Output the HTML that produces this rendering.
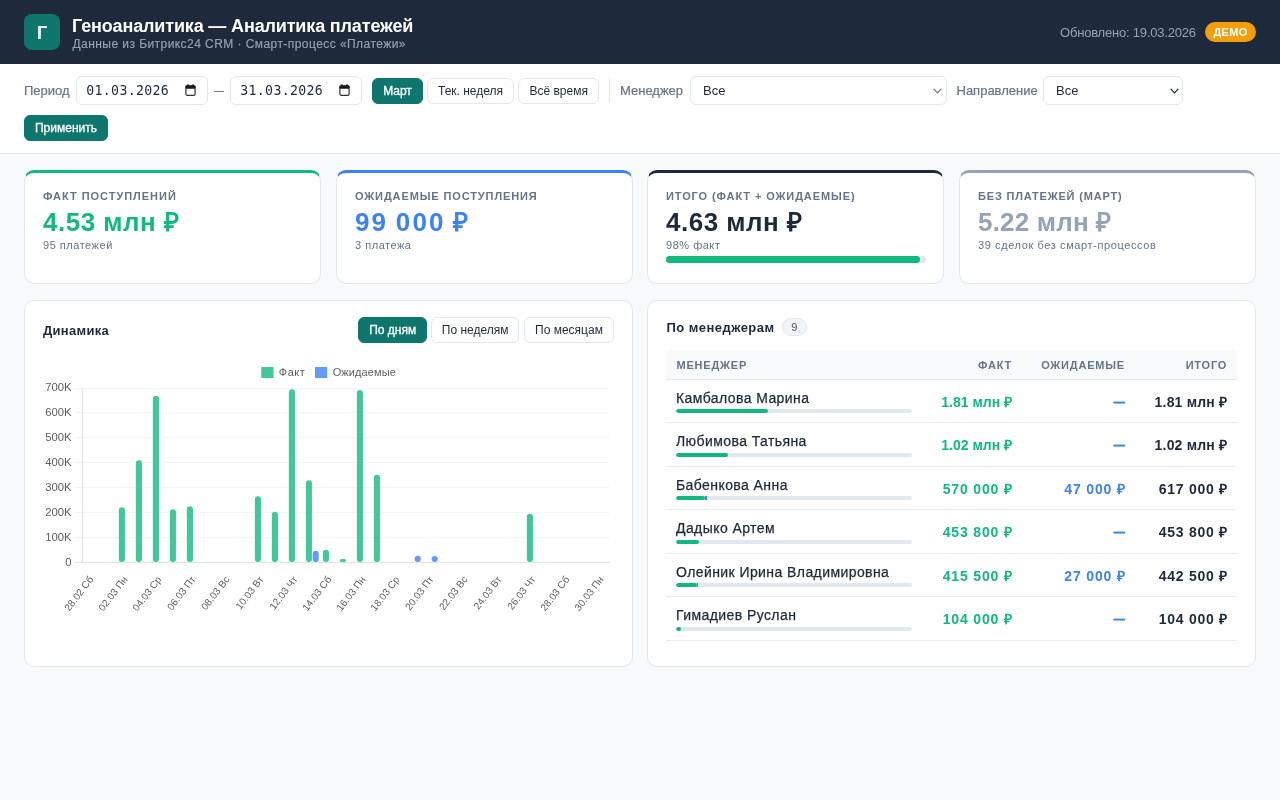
<!DOCTYPE html>
<html lang="ru">
<head>
<meta charset="utf-8">
<title>Геноаналитика — Аналитика платежей</title>
<style>
*{box-sizing:border-box;margin:0;padding:0}
html,body{width:1280px;height:800px;overflow:hidden}
body{background:#f8fafc;font-family:"Liberation Sans",sans-serif;color:#1e293b;position:relative}
.abs{position:absolute;white-space:nowrap}
#root{position:absolute;left:0;top:0;width:1280px;height:800px;will-change:transform}
#hdr{position:absolute;left:0;top:0;width:1280px;height:64px;background:#1e293b}
#logo{position:absolute;left:24px;top:14px;width:36px;height:36px;border-radius:8px;background:#0f766e;color:#fff;font-weight:700;font-size:18px;text-align:center;line-height:38.5px}
#title{left:72px;top:15px;font-size:18px;font-weight:700;color:#fff;line-height:22px;letter-spacing:-.15px}
#sub{left:72.5px;top:37px;font-size:12px;color:#94a3b8;line-height:15px;letter-spacing:.44px;-webkit-text-stroke:.15px #94a3b8}
#upd{left:1060px;top:25px;font-size:13px;color:#94a3b8;line-height:16px;letter-spacing:-.2px}
#demo{left:1205px;top:22px;width:51px;height:19.5px;border-radius:10px;background:#f59e0b;color:#fff;font-size:11px;font-weight:700;text-align:center;line-height:20px;letter-spacing:.3px}
#flt{position:absolute;left:0;top:64px;width:1280px;height:90px;background:#fff;border-bottom:1px solid #e2e8f0}
.lbl{font-size:13px;color:#64748b;line-height:16px;top:83px;-webkit-text-stroke:.2px #64748b}
.inp{position:absolute;top:76px;height:29px;border:1px solid #e2e8f0;border-radius:6px;background:#fff}
.inp span{position:absolute;white-space:nowrap}
.date span{left:9.3px;top:6px;font-family:"DejaVu Sans Mono","Liberation Mono",monospace;font-size:13.2px;letter-spacing:.33px;line-height:16.6px;color:#1e293b}
.date svg{position:absolute;left:108px;top:7.4px}
.sel span{left:12px;top:6px;font-size:13px;line-height:16px;color:#1e293b}
.sel svg{position:absolute;right:3.4px;top:10.7px}
.btn{position:absolute;top:77.5px;height:26px;border:1px solid #e2e8f0;border-radius:6px;background:#fff;font-size:12px;line-height:25px;text-align:center;color:#1e293b;white-space:nowrap}
.btn.on{background:#0f766e;border-color:#0f766e;color:#fff;-webkit-text-stroke:.3px #fff}
.card{position:absolute;background:#fff;border:1px solid #e2e8f0;border-radius:10px}
.kpi{top:170px;width:297px;height:114px;border-top:3px solid}
.kpi .t{left:18px;top:16px;font-size:11px;font-weight:700;letter-spacing:.97px;color:#64748b;line-height:14px}
.kpi .v{left:18px;top:33px;font-size:26px;font-weight:700;line-height:32px;letter-spacing:.5px}
.kpi .s{left:18px;top:65px;font-size:11px;color:#64748b;line-height:14px;letter-spacing:.52px}
.ptitle{font-size:13px;font-weight:700;color:#1e293b;line-height:16px;letter-spacing:.3px}
#tbl{position:absolute;left:666px;top:350px;width:571px}
#th{position:absolute;left:0;top:0;width:571px;height:30px;background:#f8fafc;border-bottom:1px solid #e2e8f0}
.th{position:absolute;top:8.3px;font-size:11px;font-weight:700;letter-spacing:.8px;color:#64748b;line-height:14px;white-space:nowrap}
.row{position:absolute;left:0;width:571px;height:43.5px;border-bottom:1px solid #e8edf3}
.row .n{position:absolute;left:10px;top:10px;font-size:14px;line-height:17px;color:#1e293b;white-space:nowrap;letter-spacing:.42px;-webkit-text-stroke:.25px #1e293b}
.row .pb{position:absolute;left:10px;top:29.5px;width:235.5px;height:4px;border-radius:2px;background:#e2e8f0;overflow:hidden}
.row .pb i{position:absolute;top:0;height:4px;display:block}
.row .f,.row .e,.row .g{position:absolute;top:14px;font-size:14px;line-height:17px;font-weight:700;white-space:nowrap;text-align:right}
.row .f{right:225px;color:#10b981}
.row .d{letter-spacing:.85px;margin-right:-.85px}
.row .e.m{transform:scaleX(.82);transform-origin:100% 50%;-webkit-text-stroke:.3px #3b82f6}
.row .e{right:112px;color:#3b82f6}
.row .g{right:9.9px;color:#1e293b;letter-spacing:.2px;margin-right:-.2px}
.row .g.d{letter-spacing:.72px;margin-right:-.72px}
</style>
</head>
<body><div id="root">
<div id="hdr">
  <div id="logo">Г</div>
  <div class="abs" id="title">Геноаналитика — Аналитика платежей</div>
  <div class="abs" id="sub">Данные из Битрикс24 CRM · Смарт-процесс «Платежи»</div>
  <div class="abs" id="upd">Обновлено: 19.03.2026</div>
  <div class="abs" id="demo">ДЕМО</div>
</div>
<div id="flt"></div>
<div class="abs lbl" id="l1" style="left:24px">Период</div>
<div class="inp date" style="left:76px;width:132px"><span>01.03.2026</span><svg width="11" height="12" viewBox="0 0 11 12"><rect x="0.9" y="1.9" width="9.2" height="9.4" rx="1.3" fill="none" stroke="#333" stroke-width="1.2"/><rect x="0.5" y="1.5" width="10" height="3.2" rx="1" fill="#1a1a1a"/><rect x="2.3" y="0.3" width="1.4" height="2" fill="#1a1a1a"/><rect x="7.3" y="0.3" width="1.4" height="2" fill="#1a1a1a"/></svg></div>
<div class="abs lbl" id="l2" style="left:214.4px;transform:scaleX(.76);transform-origin:0 0">—</div>
<div class="inp date" style="left:230px;width:132px"><span>31.03.2026</span><svg width="11" height="12" viewBox="0 0 11 12"><rect x="0.9" y="1.9" width="9.2" height="9.4" rx="1.3" fill="none" stroke="#333" stroke-width="1.2"/><rect x="0.5" y="1.5" width="10" height="3.2" rx="1" fill="#1a1a1a"/><rect x="2.3" y="0.3" width="1.4" height="2" fill="#1a1a1a"/><rect x="7.3" y="0.3" width="1.4" height="2" fill="#1a1a1a"/></svg></div>
<div class="btn on" id="b1" style="left:372px;width:51px">Март</div>
<div class="btn" id="b2" style="left:427px;width:87px">Тек. неделя</div>
<div class="btn" id="b3" style="left:518.3px;width:80.7px">Всё время</div>
<div class="abs" style="left:609px;top:78.5px;width:1px;height:24px;background:#e2e8f0"></div>
<div class="abs lbl" id="l3" style="left:620px">Менеджер</div>
<div class="inp sel" style="left:690px;width:256.5px"><span>Все</span><svg width="9" height="7" viewBox="0 0 9 7"><path d="M1 1.2 L4.5 4.9 L8 1.2" fill="none" stroke="#6b7280" stroke-width="1.2" stroke-linecap="round" stroke-linejoin="round"/></svg></div>
<div class="abs lbl" id="l4" style="left:956.5px">Направление</div>
<div class="inp sel" style="left:1043px;width:140px"><span>Все</span><svg width="9" height="7" viewBox="0 0 9 7"><path d="M1 1.2 L4.5 4.9 L8 1.2" fill="none" stroke="#1f2937" stroke-width="1.2" stroke-linecap="round" stroke-linejoin="round"/></svg></div>
<div class="btn on" id="b4" style="left:24px;top:115.3px;width:84px">Применить</div>

<div class="card kpi" id="k0" style="left:24px;border-top-color:#10b981"><div class="abs t" style="">ФАКТ ПОСТУПЛЕНИЙ</div><div class="abs v" style="color:#10b981">4.53 млн ₽</div><div class="abs s" style="">95 платежей</div></div>
<div class="card kpi" id="k1" style="left:336px;border-top-color:#3b82f6"><div class="abs t" style="letter-spacing:.88px">ОЖИДАЕМЫЕ ПОСТУПЛЕНИЯ</div><div class="abs v" style="color:#3b82f6;letter-spacing:2.1px;word-spacing:-1.6px">99 000 ₽</div><div class="abs s" style="">3 платежа</div></div>
<div class="card kpi" id="k2" style="left:647px;border-top-color:#1e293b"><div class="abs t" style="letter-spacing:.9px">ИТОГО (ФАКТ + ОЖИДАЕМЫЕ)</div><div class="abs v" style="color:#1e293b">4.63 млн ₽</div><div class="abs s" style="">98% факт</div><div class="abs" style="left:18px;top:82.5px;width:260px;height:7px;border-radius:4px;background:#e2e8f0"><div style="width:254px;height:7px;border-radius:4px;background:#10b981"></div></div></div>
<div class="card kpi" id="k3" style="left:959px;border-top-color:#94a3b8"><div class="abs t" style="letter-spacing:.82px">БЕЗ ПЛАТЕЖЕЙ (МАРТ)</div><div class="abs v" style="color:#94a3b8;letter-spacing:.2px">5.22 млн ₽</div><div class="abs s" style=";letter-spacing:.6px">39 сделок без смарт-процессов</div></div>
<div class="card" id="chart" style="left:24px;top:300px;width:609px;height:367px"></div>
<div class="abs ptitle" id="pt1" style="left:43px;top:323px">Динамика</div>
<div class="btn on" id="c1" style="left:358.2px;top:317.2px;width:69px">По дням</div>
<div class="btn" id="c2" style="left:431.2px;top:317.2px;width:88px">По неделям</div>
<div class="btn" id="c3" style="left:524px;top:317.2px;width:90px">По месяцам</div>
<svg class="abs" style="left:0;top:0" width="640" height="680" viewBox="0 0 640 680" font-family="Liberation Sans, sans-serif" font-size="11">
<line x1="74.8" y1="562.40" x2="609.5" y2="562.40" stroke="#dbe1e8" stroke-width="1"/>
<text x="71.6" y="566.30" text-anchor="end" fill="#5e5e5e" font-size="11.3">0</text>
<line x1="74.8" y1="537.40" x2="609.5" y2="537.40" stroke="#f1f5f9" stroke-width="1"/>
<text x="71.6" y="541.30" text-anchor="end" fill="#5e5e5e" font-size="11.3">100K</text>
<line x1="74.8" y1="512.40" x2="609.5" y2="512.40" stroke="#f1f5f9" stroke-width="1"/>
<text x="71.6" y="516.30" text-anchor="end" fill="#5e5e5e" font-size="11.3">200K</text>
<line x1="74.8" y1="487.40" x2="609.5" y2="487.40" stroke="#f1f5f9" stroke-width="1"/>
<text x="71.6" y="491.30" text-anchor="end" fill="#5e5e5e" font-size="11.3">300K</text>
<line x1="74.8" y1="462.40" x2="609.5" y2="462.40" stroke="#f1f5f9" stroke-width="1"/>
<text x="71.6" y="466.30" text-anchor="end" fill="#5e5e5e" font-size="11.3">400K</text>
<line x1="74.8" y1="437.40" x2="609.5" y2="437.40" stroke="#f1f5f9" stroke-width="1"/>
<text x="71.6" y="441.30" text-anchor="end" fill="#5e5e5e" font-size="11.3">500K</text>
<line x1="74.8" y1="412.40" x2="609.5" y2="412.40" stroke="#f1f5f9" stroke-width="1"/>
<text x="71.6" y="416.30" text-anchor="end" fill="#5e5e5e" font-size="11.3">600K</text>
<line x1="74.8" y1="388.50" x2="609.5" y2="388.50" stroke="#f1f5f9" stroke-width="1"/>
<text x="71.6" y="391.30" text-anchor="end" fill="#5e5e5e" font-size="11.3">700K</text>
<line x1="82.5" y1="388" x2="82.5" y2="562.4" stroke="#e2e2e2" stroke-width="1"/>
<rect x="261.3" y="367" width="12.2" height="11" fill="#40c79a"/>
<text x="278.8" y="376.2" fill="#5e5e5e" id="lg1" letter-spacing=".5">Факт</text>
<rect x="315" y="367" width="12.2" height="11" fill="#629bf8"/>
<text x="332.7" y="376.2" fill="#5e5e5e" id="lg2" letter-spacing=".1">Ожидаемые</text>
<rect x="118.85" y="507.15" width="6.1" height="54.85" rx="3.05" fill="#40c79a"/>
<rect x="135.85" y="460.15" width="6.1" height="101.85" rx="3.05" fill="#40c79a"/>
<rect x="152.85" y="395.65" width="6.1" height="166.35" rx="3.05" fill="#40c79a"/>
<rect x="169.85" y="509.15" width="6.1" height="52.85" rx="3.05" fill="#40c79a"/>
<rect x="186.85" y="506.15" width="6.1" height="55.85" rx="3.05" fill="#40c79a"/>
<rect x="254.85" y="496.15" width="6.1" height="65.85" rx="3.05" fill="#40c79a"/>
<rect x="271.85" y="511.65" width="6.1" height="50.35" rx="3.05" fill="#40c79a"/>
<rect x="288.85" y="389.15" width="6.1" height="172.85" rx="3.05" fill="#40c79a"/>
<rect x="305.85" y="480.15" width="6.1" height="81.85" rx="3.05" fill="#40c79a"/>
<rect x="322.85" y="549.65" width="6.1" height="12.35" rx="3.05" fill="#40c79a"/>
<rect x="339.85" y="558.90" width="6.1" height="3.10" rx="1.55" fill="#40c79a"/>
<rect x="356.85" y="389.90" width="6.1" height="172.10" rx="3.05" fill="#40c79a"/>
<rect x="373.85" y="474.65" width="6.1" height="87.35" rx="3.05" fill="#40c79a"/>
<rect x="526.85" y="513.65" width="6.1" height="48.35" rx="3.05" fill="#40c79a"/>
<rect x="312.65" y="550.65" width="6.1" height="11.35" rx="3.05" fill="#629bf8"/>
<rect x="414.65" y="555.77" width="6.1" height="6.23" rx="3.05" fill="#629bf8"/>
<rect x="431.65" y="556.02" width="6.1" height="5.98" rx="2.99" fill="#629bf8"/>
<text transform="translate(94.00,579.50) rotate(-52.5)" text-anchor="end" fill="#5e5e5e" font-size="10">28.02 Сб</text>
<text transform="translate(128.00,579.50) rotate(-52.5)" text-anchor="end" fill="#5e5e5e" font-size="10">02.03 Пн</text>
<text transform="translate(162.00,579.50) rotate(-52.5)" text-anchor="end" fill="#5e5e5e" font-size="10">04.03 Ср</text>
<text transform="translate(196.00,579.50) rotate(-52.5)" text-anchor="end" fill="#5e5e5e" font-size="10">06.03 Пт</text>
<text transform="translate(230.00,579.50) rotate(-52.5)" text-anchor="end" fill="#5e5e5e" font-size="10">08.03 Вс</text>
<text transform="translate(264.00,579.50) rotate(-52.5)" text-anchor="end" fill="#5e5e5e" font-size="10">10.03 Вт</text>
<text transform="translate(298.00,579.50) rotate(-52.5)" text-anchor="end" fill="#5e5e5e" font-size="10">12.03 Чт</text>
<text transform="translate(332.00,579.50) rotate(-52.5)" text-anchor="end" fill="#5e5e5e" font-size="10">14.03 Сб</text>
<text transform="translate(366.00,579.50) rotate(-52.5)" text-anchor="end" fill="#5e5e5e" font-size="10">16.03 Пн</text>
<text transform="translate(400.00,579.50) rotate(-52.5)" text-anchor="end" fill="#5e5e5e" font-size="10">18.03 Ср</text>
<text transform="translate(434.00,579.50) rotate(-52.5)" text-anchor="end" fill="#5e5e5e" font-size="10">20.03 Пт</text>
<text transform="translate(468.00,579.50) rotate(-52.5)" text-anchor="end" fill="#5e5e5e" font-size="10">22.03 Вс</text>
<text transform="translate(502.00,579.50) rotate(-52.5)" text-anchor="end" fill="#5e5e5e" font-size="10">24.03 Вт</text>
<text transform="translate(536.00,579.50) rotate(-52.5)" text-anchor="end" fill="#5e5e5e" font-size="10">26.03 Чт</text>
<text transform="translate(570.00,579.50) rotate(-52.5)" text-anchor="end" fill="#5e5e5e" font-size="10">28.03 Сб</text>
<text transform="translate(604.00,579.50) rotate(-52.5)" text-anchor="end" fill="#5e5e5e" font-size="10">30.03 Пн</text>
</svg>
<div class="card" id="mgr" style="left:647px;top:300px;width:609px;height:367px"></div>
<div class="abs ptitle" id="pt2" style="left:666.5px;top:320px;letter-spacing:.45px">По менеджерам</div>
<div class="abs" id="bdg" style="left:782px;top:317.5px;width:24.5px;height:18px;border-radius:9px;background:#f1f5f9;border:1px solid #e2e8f0;font-size:11px;line-height:16px;text-align:center;color:#475569">9</div>
<div id="tbl"><div id="th"><div class="th" style="left:10.5px">МЕНЕДЖЕР</div><div class="th" style="right:225px">ФАКТ</div><div class="th" style="right:112px">ОЖИДАЕМЫЕ</div><div class="th" style="right:9.8px">ИТОГО</div></div>
<div class="row" style="top:29.5px"><div class="n">Камбалова Марина</div><div class="pb"><i style="left:0;width:92.06px;background:#10b981;border-radius:2px"></i></div><div class="f">1.81 млн ₽</div><div class="e m">—</div><div class="g">1.81 млн ₽</div></div>
<div class="row" style="top:73.0px"><div class="n">Любимова Татьяна</div><div class="pb"><i style="left:0;width:51.88px;background:#10b981;border-radius:2px"></i></div><div class="f">1.02 млн ₽</div><div class="e m">—</div><div class="g">1.02 млн ₽</div></div>
<div class="row" style="top:116.5px"><div class="n">Бабенкова Анна</div><div class="pb"><i style="left:0;width:28.99px;background:#10b981;border-radius:2px"></i><i style="left:28.99px;width:2.39px;background:#3b82f6"></i></div><div class="f d">570 000 ₽</div><div class="e d">47 000 ₽</div><div class="g d">617 000 ₽</div></div>
<div class="row" style="top:160.0px"><div class="n">Дадыко Артем</div><div class="pb"><i style="left:0;width:23.08px;background:#10b981;border-radius:2px"></i></div><div class="f d">453 800 ₽</div><div class="e m">—</div><div class="g d">453 800 ₽</div></div>
<div class="row" style="top:203.5px"><div class="n">Олейник Ирина Владимировна</div><div class="pb"><i style="left:0;width:21.13px;background:#10b981;border-radius:2px"></i><i style="left:21.13px;width:1.37px;background:#3b82f6"></i></div><div class="f d">415 500 ₽</div><div class="e d">27 000 ₽</div><div class="g d">442 500 ₽</div></div>
<div class="row" style="top:247.0px"><div class="n">Гимадиев Руслан</div><div class="pb"><i style="left:0;width:5.29px;background:#10b981;border-radius:2px"></i></div><div class="f d">104 000 ₽</div><div class="e m">—</div><div class="g d">104 000 ₽</div></div>
</div>
</div></body>
</html>
